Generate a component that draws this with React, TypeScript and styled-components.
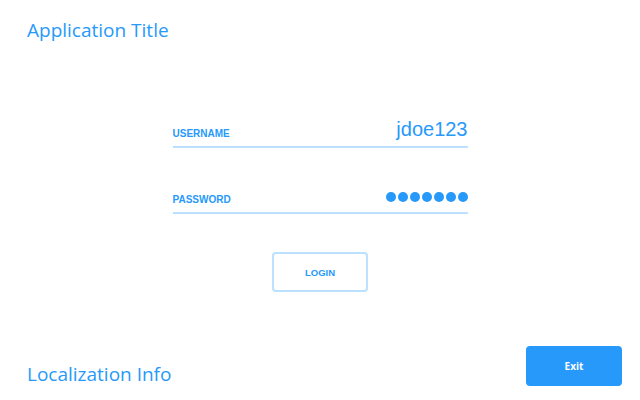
import React from "react";
import styled, { createGlobalStyle } from "styled-components";

const Global = createGlobalStyle`
  html, body {
    margin: 0;
    padding: 0;
    background: #ffffff;
  }
`;

const Page = styled.div`
  display: flex;
  flex-direction: column;
  height: 100vh;
  font-family: "Liberation Sans", Arial, sans-serif;
  color: #2699fb;
`;

const Heading = styled.div`
  padding: 18px 27px 0;
  font-family: "Open Sans", "Noto Sans", sans-serif;
  font-size: 19px;
  line-height: 24px;
  color: #2699fb;
`;

const Main = styled.div`
  flex: 1;
  display: flex;
  flex-direction: column;
  align-items: center;
  padding-top: 76px;
`;

const Form = styled.div`
  width: 295px;
  display: flex;
  flex-direction: column;
  gap: 36px;
`;

const Field = styled.div`
  display: flex;
  justify-content: space-between;
  align-items: flex-end;
  height: 24px;
  padding-bottom: 4px;
  border-bottom: 2px solid #bce0fd;
`;

const Label = styled.span`
  font-size: 10px;
  font-weight: bold;
  line-height: 12px;
  margin-bottom: 2px;
  text-transform: uppercase;
`;

const Value = styled.span`
  font-size: 20px;
  line-height: 24px;
  margin-bottom: 1px;
`;

const Dots = styled.div`
  display: flex;
  gap: 2px;
  margin-bottom: 6px;
`;

const Dot = styled.span`
  width: 10px;
  height: 10px;
  border-radius: 50%;
  background: #2699fb;
`;

const LoginButton = styled.button`
  margin-top: 38px;
  width: 96px;
  height: 40px;
  background: #ffffff;
  border: 2px solid #bce0fd;
  border-radius: 4px;
  color: #2699fb;
  font-family: "Liberation Sans", Arial, sans-serif;
  font-size: 9.5px;
  font-weight: bold;
  cursor: pointer;
`;

const Footer = styled.div`
  display: flex;
  justify-content: space-between;
  align-items: flex-end;
  padding: 0 18px 14px 27px;
`;

const Locale = styled.span`
  font-family: "Open Sans", "Noto Sans", sans-serif;
  font-size: 19px;
  line-height: 24px;
`;

const ExitButton = styled.button`
  width: 96px;
  height: 40px;
  border: none;
  border-radius: 4px;
  background: #2699fb;
  color: #ffffff;
  font-family: "Open Sans", "Noto Sans", sans-serif;
  font-size: 10px;
  font-weight: bold;
  cursor: pointer;
`;

export default function App() {
  const password = "secret1";
  return (
    <Page>
      <Global />
      <Heading>Application Title</Heading>
      <Main>
        <Form>
          <Field>
            <Label>Username</Label>
            <Value>jdoe123</Value>
          </Field>
          <Field>
            <Label>Password</Label>
            <Dots>
              {password.split("").map((_, i) => (
                <Dot key={i} />
              ))}
            </Dots>
          </Field>
        </Form>
        <LoginButton>LOGIN</LoginButton>
      </Main>
      <Footer>
        <Locale>Localization Info</Locale>
        <ExitButton>Exit</ExitButton>
      </Footer>
    </Page>
  );
}
